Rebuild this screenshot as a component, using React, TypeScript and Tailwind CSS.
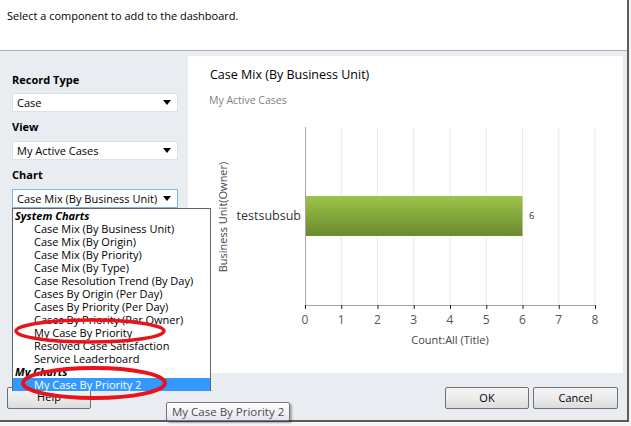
import React from 'react'

const font = { fontFamily: '"Open Sans", "Noto Sans", sans-serif' }

const systemCharts = [
    'Case Mix (By Business Unit)',
    'Case Mix (By Origin)',
    'Case Mix (By Priority)',
    'Case Mix (By Type)',
    'Case Resolution Trend (By Day)',
    'Cases By Origin (Per Day)',
    'Cases By Priority (Per Day)',
    'Cases By Priority (Per Owner)',
    'My Case By Priority',
    'Resolved Case Satisfaction',
    'Service Leaderboard',
]

function Select({ value, focused }: { value: string; focused?: boolean }) {
    return (
        <div
            className={`h-[19px] w-[166px] bg-white flex items-center justify-between pl-[4px] pr-[6px] text-[11px] text-black whitespace-nowrap border ${focused ? 'border-[#7eb4ea]' : 'border-[#dcdfe4]'}`}
        >
            <span className="leading-none">{value}</span>
            <svg width="8" height="5" viewBox="0 0 8 5"><path d="M0 0H8L4 5Z" fill="#000" /></svg>
        </div>
    )
}

function Label({ children }: { children: React.ReactNode }) {
    return <div className="text-[11px] font-bold text-black leading-[16px]">{children}</div>
}

function Chart() {
    const x0 = 117
    const step = 36.25
    const ticks = [0, 1, 2, 3, 4, 5, 6, 7, 8]
    return (
        <svg width="434" height="258" viewBox="0 0 434 258" style={font}>
            <defs>
                <linearGradient id="bar" x1="0" y1="0" x2="0" y2="1">
                    <stop offset="0" stopColor="#9cc44a" />
                    <stop offset="1" stopColor="#6b8a2f" />
                </linearGradient>
            </defs>
            {ticks.slice(1).map(t => (
                <line key={t} x1={x0 + t * step} y1="12" x2={x0 + t * step} y2="190" stroke="#e8eaf0" strokeWidth="1" />
            ))}
            <rect x={x0} y="81" width={6 * step} height="40" fill="url(#bar)" />
            <line x1={x0 + 0.5} y1="12" x2={x0 + 0.5} y2="190" stroke="#a6a6a6" />
            <line x1={x0} y1="190.5" x2={x0 + 8 * step + 0.5} y2="190.5" stroke="#a6a6a6" />
            {ticks.map(t => (
                <g key={t}>
                    <line x1={x0 + t * step + 0.5} y1="190" x2={x0 + t * step + 0.5} y2="194" stroke="#222" />
                    <text x={x0 + t * step} y="209" fontSize="12" fill="#555" textAnchor="middle">{t}</text>
                </g>
            ))}
            <text x="341" y="104" fontSize="9.5" fill="#333">6</text>
            <text x="113" y="105" fontSize="12.5" fill="#333" textAnchor="end">testsubsub</text>
            <text x="262" y="229" fontSize="11" fill="#444" textAnchor="middle">Count:All (Title)</text>
            <text x="39" y="102" fontSize="11" fill="#444" textAnchor="middle" transform="rotate(-90 39 102)">Business Unit(Owner)</text>
        </svg>
    )
}

function Button({ children, className }: { children: React.ReactNode; className?: string }) {
    return (
        <div className={`h-[22px] flex justify-center rounded-[2px] border border-[#707070] bg-gradient-to-b from-[#f4f4f4] via-[#ececec] to-[#dcdcdc] text-[11px] text-black ${className ?? ''}`}>
            {children}
        </div>
    )
}

export default function App() {
    return (
        <div className="w-[631px] h-[426px] bg-[#f4f4f4] relative overflow-hidden" style={font}>
            <div className="w-[629px] h-[422px] flex flex-col bg-[#e9ecf1] border-r-2 border-b-2 border-[#5c5c5c]">
                {/* header */}
                <div className="h-[51px] bg-white border-b border-[#a8aaad] pl-[7px] pt-[8px] text-[11px] text-black leading-[16px] shrink-0">
                    Select a component to add to the dashboard.
                </div>

                {/* body */}
                <div className="flex flex-1">
                    {/* left panel */}
                    <div className="w-[188px] shrink-0 pl-[12px] pt-[21px] flex flex-col">
                        <Label>Record Type</Label>
                        <div className="mt-[5px]"><Select value="Case" /></div>
                        <div className="mt-[7px]"><Label>View</Label></div>
                        <div className="mt-[6px]"><Select value="My Active Cases" /></div>
                        <div className="mt-[7px]"><Label>Chart</Label></div>
                        <div className="mt-[6px]"><Select value="Case Mix (By Business Unit)" focused /></div>
                    </div>

                    {/* chart panel */}
                    <div className="flex-1 flex flex-col">
                        <div className="bg-white mt-[5px] mr-[4px] h-[317px] flex flex-col">
                            <div className="pl-[22px] pt-[11px] text-[12.5px] text-black leading-[16px]">Case Mix (By Business Unit)</div>
                            <div className="pl-[21px] pt-[10px] text-[10.5px] text-[#808080] leading-[14px]">My Active Cases</div>
                            <div className="mt-[8px]"><Chart /></div>
                        </div>
                        <div className="flex justify-end gap-[4px] mt-[14px] mr-[9px]">
                            <Button className="w-[84px] items-center">OK</Button>
                            <Button className="w-[85px] items-center">Cancel</Button>
                        </div>
                    </div>
                </div>
            </div>

            {/* Help button (behind dropdown) */}
            <div className="absolute left-[7px] top-[387px]">
                <Button className="w-[84px] items-start pt-[1px] leading-[16px]">Help</Button>
            </div>

            {/* dropdown list */}
            <div className="absolute left-[12px] top-[208px] w-[199px] h-[183px] bg-white border border-[#646464] text-[11px] text-black leading-[13px] whitespace-nowrap">
                <div className="pl-[2px] font-bold italic">System Charts</div>
                {systemCharts.map(c => (
                    <div key={c} className="pl-[21px]">{c}</div>
                ))}
                <div className="pl-[2px] font-bold italic">My Charts</div>
                <div className="pl-[21px] bg-[#3399ff] text-white">My Case By Priority 2</div>
            </div>

            {/* tooltip */}
            <div className="absolute left-[166px] top-[402px] h-[19px] px-[5px] flex items-center rounded-[2px] border border-[#767676] bg-gradient-to-b from-white to-[#e4e5f0] text-[11.5px] text-[#4c4c4c] shadow-[2px_2px_2px_rgba(0,0,0,0.3)]">
                My Case By Priority 2
            </div>

            {/* red annotation ellipses */}
            <svg className="absolute left-0 top-0 pointer-events-none" width="631" height="426">
                <ellipse cx="90" cy="331" rx="74" ry="11" fill="none" stroke="#e8131b" strokeWidth="3.5" />
                <ellipse cx="94" cy="383" rx="71" ry="15" fill="none" stroke="#e8131b" strokeWidth="4" />
            </svg>
        </div>
    )
}
